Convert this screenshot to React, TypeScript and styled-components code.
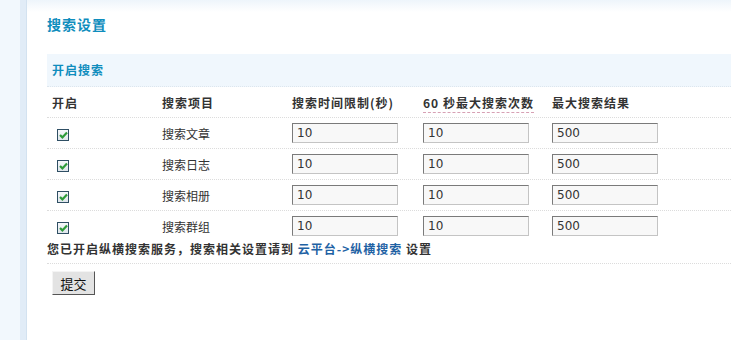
import React from "react";
import styled, { createGlobalStyle } from "styled-components";

const Global = createGlobalStyle`
  html, body { margin: 0; padding: 0; background: #fff; }
  body { font: 12px "Noto Sans CJK SC", "Liberation Sans", sans-serif; color: #333; }
`;

const Page = styled.div`
  display: flex;
  width: 731px;
  height: 340px;
  overflow: hidden;
`;

const Sidebar = styled.div`
  width: 20px;
  background: #f2f8fd;
`;

const SidebarEdge = styled.div`
  width: 6px;
  background: #e1ecf7;
  border-right: 1px solid #d3e2f0;
`;

const Main = styled.div`
  flex: 1;
  padding-left: 20px;
  background: linear-gradient(#eef5fb 0, #fff 12px);
`;

const Title = styled.h3`
  margin: 0;
  padding-top: 13px;
  height: 22px;
  line-height: 22px;
  font-size: 14px;
  font-weight: bold;
  letter-spacing: 1px;
  color: #0f8dbd;
`;

const SectionBar = styled.div`
  margin-top: 19px;
  height: 32px;
  line-height: 32px;
  padding-left: 5px;
  background: #f0f7fd;
  border-bottom: 1px dotted #dde6ee;
  font-weight: bold;
  letter-spacing: 1px;
  color: #0f8dbd;
`;

const Row = styled.div<{ $head?: boolean; $last?: boolean }>`
  display: grid;
  grid-template-columns: 110px 130px 131px 129px 1fr;
  align-items: center;
  height: 30px;
  padding-left: 5px;
  border-bottom: ${(p) => (p.$last ? "none" : "1px dotted #dcdcdc")};
  font-weight: ${(p) => (p.$head ? "bold" : "normal")};
  letter-spacing: ${(p) => (p.$head ? "1px" : "0")};
`;

const Hint = styled.span`
  border-bottom: 1px dashed #d7a0b4;
  padding-bottom: 1px;
`;

const Check = styled.span`
  display: inline-flex;
  align-items: center;
  justify-content: center;
  width: 10px;
  height: 10px;
  margin-left: 5px;
  border: 1px solid #2f4f64;
  background: linear-gradient(#f6f8fa, #dfe6ec);
`;

const TextInput = styled.input`
  box-sizing: border-box;
  width: 106px;
  height: 20px;
  padding: 0 4px;
  font: 12px "DejaVu Sans", "Liberation Sans", sans-serif;
  color: #333;
  background: #f8f8f8;
  border: 1px solid;
  border-color: #7a7a7a #c4c4c4 #c4c4c4 #7a7a7a;
  outline: none;
`;

const Notice = styled.div`
  height: 22px;
  line-height: 16px;
  font-weight: bold;
  letter-spacing: 1px;
  border-bottom: 1px dotted #dcdcdc;
`;

const Link = styled.a`
  color: #1f62a4;
  text-decoration: none;
`;

const Actions = styled.div`
  display: flex;
  padding: 7px 0 0 5px;
`;

const Button = styled.button`
  width: 43px;
  height: 24px;
  padding: 0;
  font: 13px "Noto Sans CJK SC", sans-serif;
  color: #111;
  background: #e3e3e3;
  border: 1px solid;
  border-color: #f4f4f4 #555 #555 #f4f4f4;
`;

const CheckMark = () => (
  <svg width="9" height="8" viewBox="0 0 9 8">
    <path d="M1 4 L3.4 6.4 L8 1.4" fill="none" stroke="#2e9b3a" strokeWidth="2.2" />
  </svg>
);

const rows = ["搜索文章", "搜索日志", "搜索相册", "搜索群组"];

export default function App() {
  return (
    <>
      <Global />
      <Page>
        <Sidebar />
        <SidebarEdge />
        <Main>
          <Title>搜索设置</Title>
          <SectionBar>开启搜索</SectionBar>
          <Row $head>
            <span>开启</span>
            <span>搜索项目</span>
            <span>搜索时间限制(秒)</span>
            <span>
              <Hint>60 秒最大搜索次数</Hint>
            </span>
            <span>最大搜索结果</span>
          </Row>
          {rows.map((r, i) => (
            <Row key={r} $last={i === rows.length - 1}>
              <span>
                <Check>
                  <CheckMark />
                </Check>
              </span>
              <span>{r}</span>
              <span>
                <TextInput defaultValue="10" />
              </span>
              <span>
                <TextInput defaultValue="10" />
              </span>
              <span>
                <TextInput defaultValue="500" />
              </span>
            </Row>
          ))}
          <Notice>
            您已开启纵横搜索服务，搜索相关设置请到 <Link href="#">云平台-&gt;纵横搜索</Link> 设置
          </Notice>
          <Actions>
            <Button>提交</Button>
          </Actions>
        </Main>
      </Page>
    </>
  );
}
